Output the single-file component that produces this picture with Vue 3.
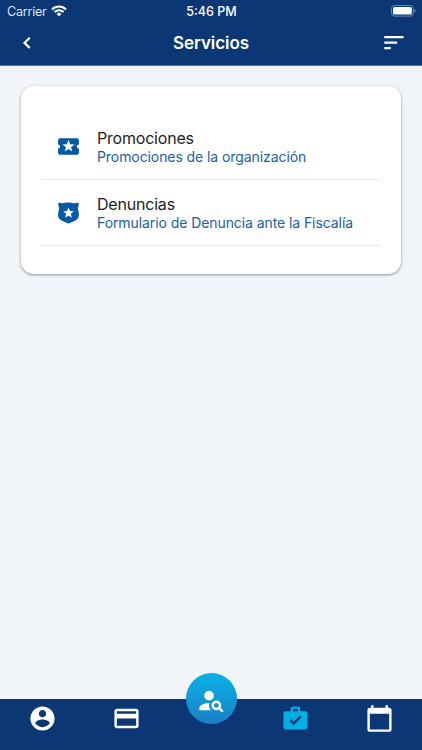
<template>
  <div class="screen">
    <header class="header">
      <div class="status-bar">
        <div class="carrier">
          <span class="carrier-name">Carrier</span>
          <svg class="wifi" viewBox="0 0 16 12">
            <path d="M1 4.4a10 10 0 0 1 14 0" />
            <path d="M3.5 7.1a6.4 6.4 0 0 1 9 0" />
            <path class="dot" d="M8 11.4 5.6 9a3.4 3.4 0 0 1 4.8 0z" />
          </svg>
        </div>
        <span class="time">5:46 PM</span>
        <div class="battery-wrap">
          <svg class="battery" viewBox="0 0 25 12">
            <rect class="outline" x="0.5" y="0.5" width="21.8" height="10.6" rx="3" />
            <rect x="2" y="2" width="18.8" height="7.6" rx="1.6" />
            <path class="cap" d="M23.4 4v3.6q1.3-.5 1.3-1.8T23.4 4z" />
          </svg>
        </div>
      </div>
      <div class="toolbar">
        <button class="tool-btn back" aria-label="Volver">
          <svg viewBox="0 0 10 14"><path d="M7.7 1.8 2.5 6.9l5.2 5.1" /></svg>
        </button>
        <h1>Servicios</h1>
        <button class="tool-btn sort" aria-label="Ordenar">
          <svg viewBox="0 0 20 14">
            <path d="M.3 1.1h19.2M.3 6.6h12.9M.3 12.1h6.5" />
          </svg>
        </button>
      </div>
    </header>

    <main class="content">
      <ul class="card">
        <li v-for="s in servicios" :key="s.titulo" class="item">
          <svg class="item-icon" viewBox="0 0 24 24">
            <path fill-rule="evenodd" :d="s.icono" />
          </svg>
          <div class="item-text">
            <span class="titulo">{{ s.titulo }}</span>
            <span class="detalle">{{ s.detalle }}</span>
          </div>
        </li>
      </ul>
    </main>

    <nav class="tabs">
      <button
        v-for="(tab, i) in tabs"
        :key="tab.nombre"
        :class="['tab', { activo: i === activo, central: tab.central }]"
        :aria-label="tab.nombre"
        @click="activo = i"
      >
        <svg viewBox="0 0 24 24"><path :d="tab.icono" /></svg>
      </button>
    </nav>
  </div>
</template>

<script setup>
import { ref } from 'vue'

const activo = ref(3)

const servicios = [
  {
    titulo: 'Promociones',
    detalle: 'Promociones de la organización',
    icono: 'M20 12c0-1.1.9-2 2-2V6c0-1.1-.9-2-2-2H4c-1.1 0-1.99.9-1.99 2v4c1.1 0 1.99.9 1.99 2s-.89 2-2 2v4c0 1.1.9 2 2 2h16c1.1 0 2-.9 2-2v-4c-1.1 0-2-.9-2-2zm-4.42 4.8L12 14.5l-3.58 2.3 1.08-4.12-3.29-2.69 4.24-.25L12 5.8l1.54 3.95 4.24.25-3.29 2.69 1.09 4.11z'
  },
  {
    titulo: 'Denuncias',
    detalle: 'Formulario de Denuncia ante la Fiscalía',
    icono: 'M3.2 2.3C5 3.2 7 3.3 8.8 2.7Q12 2.1 15.2 2.7C17 3.3 19 3.2 20.8 2.3L22.1 4C21 6 21 8 21.4 10C21.8 12 22 13 22 15C21.6 19.2 17 20.6 12 22.5C7 20.6 2.4 19.2 2 15C2 13 2.2 12 2.6 10C3 8 3 6 1.9 4zM15.2 16.9L14.3 13.3L17.1 10.9L13.45 10.6L12 7.2L10.55 10.6L6.9 10.9L9.7 13.3L8.8 16.9L12 15z'
  }
]

const tabs = [
  {
    nombre: 'Perfil',
    icono: 'M12 2C6.48 2 2 6.48 2 12s4.48 10 10 10 10-4.48 10-10S17.52 2 12 2zm0 3c1.66 0 3 1.34 3 3s-1.34 3-3 3-3-1.34-3-3 1.34-3 3-3zm0 14.2c-2.5 0-4.71-1.28-6-3.22.03-1.99 4-3.08 6-3.08 1.99 0 5.97 1.09 6 3.08-1.29 1.94-3.5 3.22-6 3.22z'
  },
  {
    nombre: 'Tarjeta',
    icono: 'M20 4H4c-1.11 0-1.99.89-1.99 2L2 18c0 1.11.89 2 2 2h16c1.11 0 2-.89 2-2V6c0-1.11-.89-2-2-2zm0 14H4v-6h16v6zm0-10H4V6h16v2z'
  },
  {
    nombre: 'Buscar',
    central: true,
    icono: 'M10 4a4 4 0 1 0 0 8 4 4 0 0 0 0-8zM10.35 14.01C7.62 13.91 2 15.27 2 18v2h9.54c-2.47-2.76-1.23-5.89-1.19-5.99zM19.43 18.02c.36-.59.57-1.28.57-2.02 0-2.21-1.79-4-4-4s-4 1.79-4 4 1.79 4 4 4c.74 0 1.43-.22 2.02-.57L20.59 22 22 20.59l-2.57-2.57zM16 18c-1.1 0-2-.9-2-2s.9-2 2-2 2 .9 2 2-.9 2-2 2z'
  },
  {
    nombre: 'Servicios',
    icono: 'M10 2H14A2 2 0 0 1 16 4V6H20A2 2 0 0 1 22 8V19A2 2 0 0 1 20 21H4C2.89 21 2 20.1 2 19V8C2 6.89 2.89 6 4 6H8V4C8 2.89 8.89 2 10 2M14 6V4H10V6H14M10.5 17.5L17.09 10.91L15.68 9.5L10.5 14.67L8.41 12.59L7 14L10.5 17.5Z'
  },
  {
    nombre: 'Agenda',
    icono: 'M20 3h-1V1h-2v2H7V1H5v2H4c-1.1 0-2 .9-2 2v16c0 1.1.9 2 2 2h16c1.1 0 2-.9 2-2V5c0-1.1-.9-2-2-2zm0 18H4V8h16v13z'
  }
]
</script>

<style>
body {
  margin: 0;
}
</style>

<style scoped>
.screen {
  height: 100vh;
  display: flex;
  flex-direction: column;
  overflow: hidden;
  background: #f1f4f9;
  font-family: Inter, 'Liberation Sans', sans-serif;
}

button {
  border: none;
  padding: 0;
  background: none;
  color: inherit;
  cursor: pointer;
}

svg {
  display: block;
  fill: currentColor;
}

.header {
  flex: none;
  height: 65px;
  background: #0b3775;
  border-bottom: 1px solid #587399;
  color: white;
}

.status-bar {
  height: 22px;
  display: grid;
  grid-template-columns: 1fr auto 1fr;
  align-items: center;
  padding: 0 6px 0 7px;
  font-size: 13px;
}

.carrier {
  display: flex;
  align-items: center;
  gap: 4px;
  color: #dce5f1;
}

.carrier-name {
  font-size: 12.5px;
  letter-spacing: -0.2px;
}

.wifi {
  width: 16px;
  height: 12px;
  margin-top: -1px;
  color: white;
}

.wifi path {
  fill: none;
  stroke: currentColor;
  stroke-width: 2.1;
}

.wifi .dot {
  fill: currentColor;
  stroke: none;
}

.time {
  font-weight: 500;
  font-size: 12.5px;
}

.battery-wrap {
  display: flex;
  justify-content: flex-end;
}

.battery {
  width: 25px;
  height: 12px;
  margin-top: -1px;
}

.battery .outline {
  fill: none;
  stroke: #7188ad;
}

.battery .cap {
  fill: #7188ad;
}

.toolbar {
  height: 42px;
  display: grid;
  grid-template-columns: 1fr auto 1fr;
  align-items: center;
  padding: 0 18px;
}

h1 {
  margin: 0;
  font-size: 17px;
  font-weight: 600;
  line-height: 22px;
  letter-spacing: -0.05px;
}

.tool-btn svg {
  fill: none;
  stroke: currentColor;
}

.back {
  justify-self: start;
  margin-left: 4px;
}

.back svg {
  width: 10px;
  height: 14px;
  stroke-width: 2.2;
}

.sort {
  justify-self: end;
}

.sort svg {
  width: 20px;
  height: 14px;
  stroke-width: 2.1;
}

.content {
  flex: 1;
  padding: 20px 21px;
}

.card {
  list-style: none;
  margin: 0;
  padding: 28px 20px;
  background: white;
  border-radius: 13px;
  box-shadow: 0 1px 3px rgba(0, 0, 0, 0.42);
}

.item {
  height: 65px;
  display: flex;
  align-items: center;
  border-bottom: 1px solid #e9eaec;
}

.item-icon {
  width: 25px;
  height: 25px;
  margin: 0 16px 0 15px;
  color: #0559a5;
}

.item-text {
  display: flex;
  flex-direction: column;
  padding-top: 2px;
}

.titulo {
  font-size: 16px;
  line-height: 19px;
  letter-spacing: -0.2px;
  color: #1d1d1f;
}

.detalle {
  font-size: 14px;
  line-height: 18px;
  letter-spacing: -0.08px;
  color: #1b60a5;
  white-space: nowrap;
}

.tabs {
  flex: none;
  height: 51px;
  display: flex;
  background: #0b3775;
  color: white;
}

.tab {
  flex: 1;
  display: flex;
  justify-content: center;
  padding-top: 5px;
}

.tab svg {
  width: 29px;
  height: 29px;
}

.activo {
  color: #05ade7;
}

.central {
  flex: none;
  width: 51px;
  height: 51px;
  margin: -26px 16.7px 0;
  padding-top: 13px;
  border-radius: 50%;
  background: linear-gradient(#08b2e6, #1c7fc4);
  color: white;
}
</style>
